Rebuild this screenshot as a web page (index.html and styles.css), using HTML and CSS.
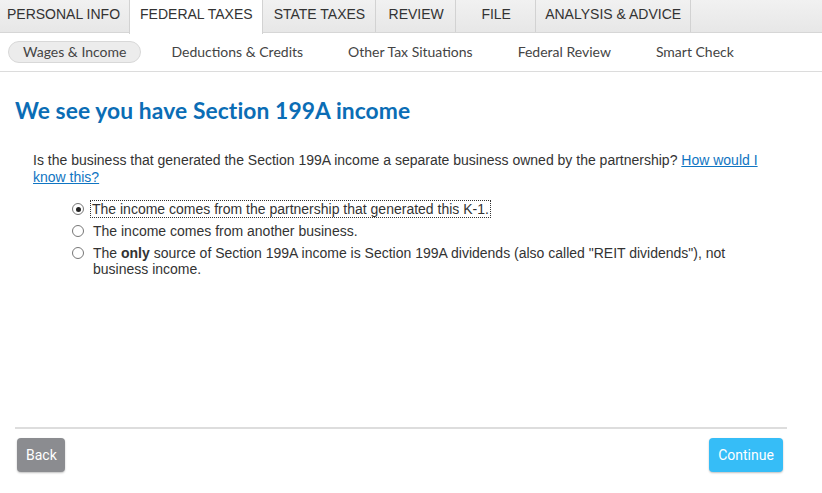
FILE: index.html
```
<!DOCTYPE html>
<html lang="en">
<head>
<meta charset="utf-8">
<title>Section 199A income</title>
<link rel="stylesheet" href="styles.css">
</head>
<body>
<div class="page">
  <nav class="tabs">
    <div class="tab">PERSONAL INFO</div>
    <div class="tab active">FEDERAL TAXES</div>
    <div class="tab">STATE TAXES</div>
    <div class="tab">REVIEW</div>
    <div class="tab">FILE</div>
    <div class="tab">ANALYSIS &amp; ADVICE</div>
  </nav>
  <nav class="subnav">
    <div class="subitem current">Wages &amp; Income</div>
    <div class="subitem">Deductions &amp; Credits</div>
    <div class="subitem">Other Tax Situations</div>
    <div class="subitem">Federal Review</div>
    <div class="subitem">Smart Check</div>
  </nav>
  <main class="content">
    <h1 class="title">We see you have Section 199A income</h1>
    <p class="question">Is the business that generated the Section 199A income a separate business owned by the partnership? <a href="#" class="help"> How would I know this?</a></p>
    <div class="options">
      <label class="option"><span class="radio checked"></span><span class="label focused">The income comes from the partnership that generated this K-1.</span></label>
      <label class="option"><span class="radio"></span><span class="label">The income comes from another business.</span></label>
      <label class="option"><span class="radio"></span><span class="label">The <b>only</b> source of Section 199A income is Section 199A dividends (also called "REIT dividends"), not business income.</span></label>
    </div>
  </main>
  <footer class="footer">
    <button class="btn back">Back</button>
    <button class="btn continue">Continue</button>
  </footer>
</div>
</body>
</html>
```
FILE: styles.css
```
html, body {
  margin: 0;
  padding: 0;
  background: #ffffff;
}
.page {
  height: 493px;
  display: flex;
  flex-direction: column;
  font-family: "Liberation Sans", Arial, sans-serif;
  color: #333;
}
.tabs {
  display: flex;
  height: 33px;
  background: linear-gradient(#f1f1f1, #e7e7e7);
  border-bottom: 1px solid #d6d6d6;
  box-sizing: border-box;
}
.tab {
  min-width: 80px;
  box-sizing: border-box;
  padding: 0 10px 0 11px;
  border-right: 1px solid #d2d2d2;
  font-size: 14px;
  line-height: 29px;
  text-align: center;
  color: #333;
  white-space: nowrap;
}
.tab:first-child {
  padding: 0 9px 0 7px;
}
.tab.active {
  background: #ffffff;
  padding: 0 9px 0 10px;
  height: 34px;
  margin-left: -1px;
  border-left: 1px solid #d2d2d2;
  position: relative;
  z-index: 1;
}
.tab:last-child {
  padding: 0 9px 0 9px;
}
.subnav {
  display: flex;
  align-items: center;
  gap: 15px;
  height: 38px;
  padding: 0 8px;
  border-bottom: 1px solid #dcdcdc;
  font-family: Lato, "Open Sans", sans-serif;
  font-size: 14px;
  color: #444;
}
.subitem {
  padding: 0 14px 0 14px;
  height: 22px;
  line-height: 20px;
  box-sizing: border-box;
  border: 1px solid transparent;
  border-radius: 12px;
  white-space: nowrap;
}
.subitem.current {
  background: #ececec;
  border-color: #d8d8d8;
}
.content {
  flex: 1;
  padding: 0 15px;
}
.title {
  margin: 24px 0 0 0;
  font-family: Lato, "Open Sans", sans-serif;
  font-weight: 700;
  font-size: 22.8px;
  color: #0b6db5;
  letter-spacing: 0.1px;
}
.question {
  margin: 28px 0 0 18px;
  width: 748px;
  font-size: 14px;
  line-height: 17px;
  color: #333;
}
.help {
  color: #1075c2;
  text-decoration: underline;
}
.options {
  margin: 15px 0 0 57px;
  display: flex;
  flex-direction: column;
  gap: 6px;
  width: 680px;
}
.option {
  display: flex;
  align-items: flex-start;
  font-size: 14px;
  line-height: 16px;
  color: #333;
}
.radio {
  flex: none;
  width: 12px;
  height: 12px;
  border: 1px solid #777;
  border-radius: 50%;
  box-sizing: border-box;
  margin: 2px 9px 0 0;
  background: #fff;
  position: relative;
}
.radio.checked::after {
  content: "";
  position: absolute;
  left: 2.5px;
  top: 2.5px;
  width: 5px;
  height: 5px;
  border-radius: 50%;
  background: #222;
}
.label.focused {
  outline: 1px dotted #333;
  padding: 0 1px;
  margin-left: -2px;
}
.footer {
  margin: 0 35px 21px 15px;
  border-top: 2px solid #dddddd;
  padding-top: 9px;
  display: flex;
  justify-content: space-between;
}
.btn {
  height: 34px;
  border: none;
  border-radius: 4px;
  color: #fff;
  font-family: Roboto, "Liberation Sans", sans-serif;
  font-size: 14px;
  padding: 0 9px;
  box-shadow: 0 1px 2px rgba(0, 0, 0, 0.25);
}
.btn.back {
  margin-left: 2px;
  width: 48px;
  background: #8b8c90;
}
.btn.continue {
  margin-right: 4px;
  width: 74px;
  background: #36bdf7;
}
```
